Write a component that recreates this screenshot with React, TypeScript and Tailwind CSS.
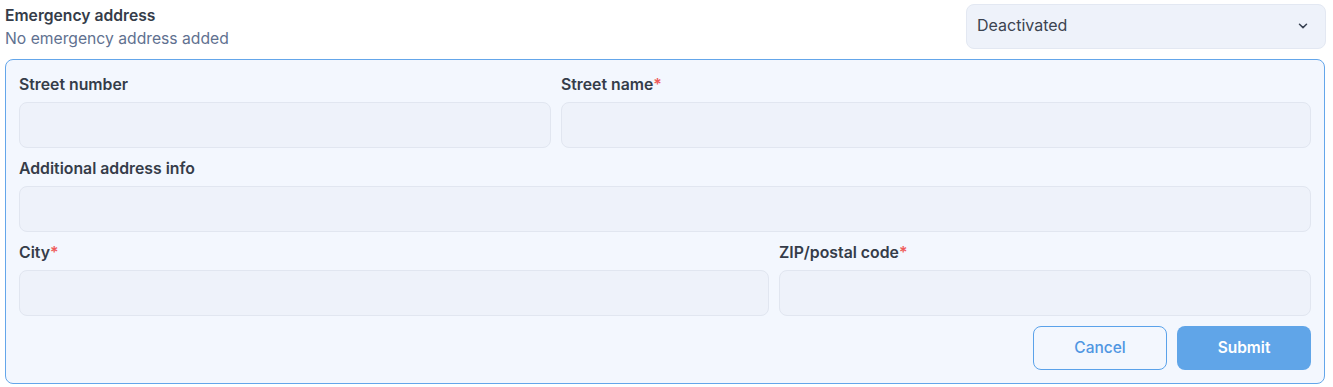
import React from "react";

function Label({ text, required }: { text: string; required?: boolean }) {
  return (
    <div className="text-[15.8px] leading-[20px] font-semibold text-[#353c49] pt-[1px] mb-[7px]">
      {text}
      {required && <span className="text-[#ef5b5b]">*</span>}
    </div>
  );
}

function Input() {
  return <div className="h-[46px] rounded-[8px] border border-[#e1e6f0] bg-[#eef2fa]" />;
}

export default function App() {
  return (
    <div className="w-[1333px] h-[387px] bg-white" style={{ fontFamily: "Inter, 'Noto Sans', sans-serif" }}>
      <div className="ml-[5px] w-[1321px] pt-[4px]">
        <div className="flex items-start justify-between">
          <div className="pt-[2px]">
            <div className="text-[15.7px] leading-[20px] font-semibold text-[#353c49]">Emergency address</div>
            <div className="text-[15.7px] leading-[22px] text-[#5f7190] mt-[2px]">No emergency address added</div>
          </div>
          <div className="w-[360px] h-[45px] rounded-[8px] border border-[#e3e8f2] bg-[#eef2fa] flex items-center justify-between pl-[10px] pr-[17px]">
            <span className="text-[16px] leading-[20px] text-[#3b4350] -mt-[3px]">Deactivated</span>
            <svg width="10" height="6" viewBox="0 0 10 6" fill="none" className="-mt-[2px]">
              <path d="M1.5 1.2 L5 4.6 L8.5 1.2" stroke="#384252" strokeWidth="1.5" strokeLinecap="round" strokeLinejoin="round" />
            </svg>
          </div>
        </div>
        <div className="mt-[9px] w-[1320px] h-[325px] rounded-[8px] border border-[#64a6ea] bg-[#f3f7fe] px-[13px] pt-[14px]">
          <div className="grid grid-cols-[532px_1fr] gap-x-[10px]">
            <div>
              <Label text="Street number" />
              <Input />
            </div>
            <div>
              <Label text="Street name" required />
              <Input />
            </div>
          </div>
          <div className="mt-[10px]">
            <Label text="Additional address info" />
            <Input />
          </div>
          <div className="mt-[10px] grid grid-cols-[1fr_532px] gap-x-[10px]">
            <div>
              <Label text="City" required />
              <Input />
            </div>
            <div>
              <Label text="ZIP/postal code" required />
              <Input />
            </div>
          </div>
          <div className="mt-[10px] flex justify-end gap-[10px]">
            <button className="w-[134px] h-[44px] rounded-[8px] border border-[#5aa2ea] bg-transparent text-[15.5px] font-medium text-[#4f96e2]">
              Cancel
            </button>
            <button className="w-[134px] h-[44px] rounded-[8px] bg-[#60a5e8] text-[15.5px] font-semibold text-white">
              Submit
            </button>
          </div>
        </div>
      </div>
    </div>
  );
}
